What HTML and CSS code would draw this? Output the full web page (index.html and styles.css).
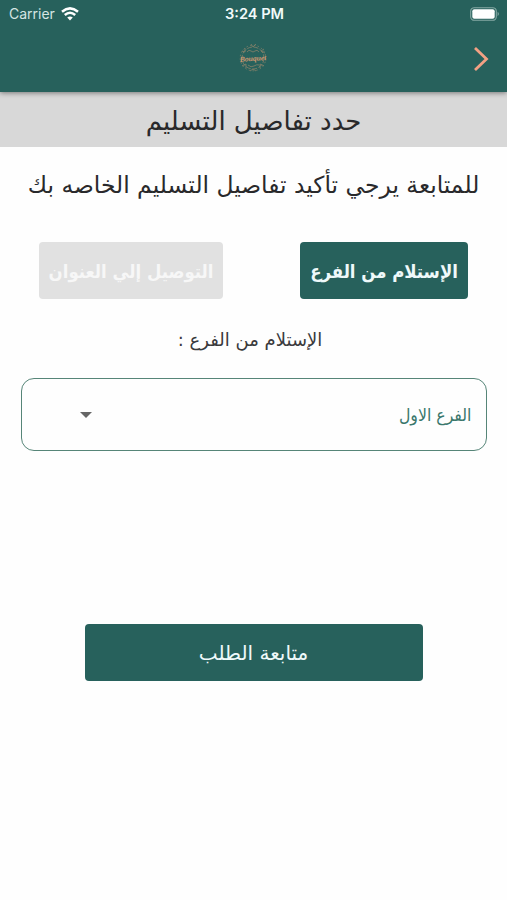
FILE: index.html
```html
<!DOCTYPE html>
<html lang="ar" dir="rtl">
<head>
    <meta charset="UTF-8">
    <meta name="viewport" content="width=device-width, initial-scale=1.0">
    <title>Bouquet</title>
    <link rel="stylesheet" href="styles.css">
</head>
<body>
    <header class="header">
        <div class="status-bar" dir="ltr">
            <div class="carrier">
                <span>Carrier</span>
                <svg width="18" height="14" viewBox="0 0 18 14" fill="none" stroke="#fff" stroke-width="2.5">
                    <path d="M1 4.7Q9-2 17 4.7"/>
                    <path d="M3.8 8Q9 3.5 14.2 8"/>
                    <path d="M6.2 10.6Q9 8.2 11.8 10.6L9 13.4Z" fill="#fff" stroke="none"/>
                </svg>
            </div>
            <span class="time">3:24 PM</span>
            <svg class="battery" width="30" height="14" viewBox="0 0 30 14">
                <rect x="0.7" y="0.7" width="25.6" height="12.6" rx="3.6" fill="none" stroke="#86a9a4" stroke-width="1.1"/>
                <rect x="2.3" y="2.3" width="22.4" height="9.4" rx="2" fill="#fff"/>
                <path d="M27.6 4.8Q30.2 7 27.6 9.2Z" fill="#86a9a4"/>
            </svg>
        </div>
        <div class="nav-bar" dir="ltr">
            <svg class="logo" width="40" height="32" viewBox="-5 0 40 32" fill="none">
                <g stroke="#87816a" stroke-width="0.8">
                    <circle cx="14" cy="15" r="11" stroke-dasharray="5 1.5"/>
                    <circle cx="14" cy="15" r="12.8" stroke-dasharray="1.5 2.3"/>
                    <path d="M8 9q2-3 4-1t4 0 4 1M9 22q3 3 6 1t5-1"/>
                    <path d="M12 1l2 3 3-3M3 8l3 1 0-4M25 6l-3 2 4 2M3 23l4-2 0 4M21 25l0-4 4 2M11 28l3-2 3 2"/>
                </g>
                <text x="14" y="18" class="logo-text" transform="rotate(-4 14 15)">Bouquet</text>
            </svg>
            <svg class="arrow" width="18" height="26" viewBox="0 0 18 26">
                <path d="M3 2L14.5 13L3 24" fill="none" stroke="#f3a184" stroke-width="2.8"/>
            </svg>
        </div>
    </header>

    <h1 class="page-title"><span>حدد تفاصيل التسليم</span></h1>
    <main class="content">
        <p class="intro"><span>للمتابعة يرجي تأكيد تفاصيل التسليم الخاصه بك</span></p>
        <div class="options">
            <button class="btn option active"><span>الإستلام من الفرع</span></button>
            <button class="btn option address"><span>التوصيل إلي العنوان</span></button>
        </div>
        <p class="branch-label"><span>الإستلام من الفرع :</span></p>
        <div class="branch-select">
            <span class="branch-name">الفرع الاول</span>
            <svg width="12" height="6" viewBox="0 0 12 6"><path d="M0 0H12L6 6Z" fill="#666"/></svg>
        </div>
        <button class="btn submit"><span>متابعة الطلب</span></button>
    </main>
</body>
</html>
```
FILE: styles.css
```css
* {
    box-sizing: border-box;
}
body {
    margin: 0;
    background-color: #fefefe;
    color: #29292b;
    font-family: "DejaVu Sans", sans-serif;
}
h1, p {
    margin: 0;
    font-weight: normal;
    white-space: nowrap;
}
.header {
    position: relative;
    height: 92px;
    background-color: #27615c;
    box-shadow: 0 1px 5px rgba(0,0,0,0.45);
}
.status-bar {
    display: grid;
    grid-template-columns: 1fr auto 1fr;
    align-items: center;
    height: 27px;
    padding: 0 7px 0 9px;
    color: #f1fafa;
    font-family: Inter, sans-serif;
    font-size: 14px;
}
.carrier {
    display: flex;
    align-items: center;
    gap: 6px;
    color: #d5e5e3;
}
.time {
    font-weight: 600;
    font-size: 14.6px;
}
.battery {
    justify-self: end;
}
.nav-bar {
    display: grid;
    grid-template-columns: 1fr 40px 1fr;
    align-items: center;
    height: 64px;
    padding: 0 17px;
}
.logo {
    grid-column: 2;
    overflow: visible;
}
.arrow {
    grid-column: 3;
    justify-self: end;
}
.logo-text {
    fill: #d29a72;
    font: italic bold 7.6px "Liberation Serif", serif;
    text-anchor: middle;
}
.page-title {
    display: flex;
    align-items: center;
    justify-content: center;
    height: 55px;
    padding-top: 2px;
    background-color: #d8d8d8;
    font-size: 26px;
}
.content {
    display: flex;
    flex-direction: column;
    align-items: center;
}
.intro {
    display: flex;
    align-items: center;
    height: 76px;
    font-size: 23.4px;
}
.options {
    display: flex;
    justify-content: space-between;
    width: 100%;
    margin-top: 19px;
    padding: 0 39px;
}
.btn {
    display: flex;
    align-items: center;
    justify-content: center;
    height: 57px;
    padding: 0;
    border: none;
    border-radius: 4px;
    background-color: #27615c;
    color: #eff9fa;
    font-family: inherit;
    font-size: 20px;
    white-space: nowrap;
}
.option {
    width: 168px;
    padding-top: 2px;
    font-family: "DejaVu Sans Condensed", "DejaVu Sans", sans-serif;
    font-stretch: condensed;
    font-weight: bold;
    font-size: 18.4px;
}
.option.address {
    width: 184px;
    background-color: #e1e1e1;
    color: #f7f7f7;
}
.branch-label {
    display: flex;
    align-items: center;
    height: 79px;
    padding-top: 2px;
    padding-right: 7px;
    color: #3a3a3c;
    font-size: 18px;
}
.branch-select {
    display: flex;
    align-items: center;
    justify-content: space-between;
    width: 466px;
    height: 73px;
    padding: 0 14px 0 58px;
    border: 1.5px solid #568578;
    border-radius: 13px;
}
.branch-name {
    color: #39776c;
    font-family: "DejaVu Sans Condensed", "DejaVu Sans", sans-serif;
    font-stretch: condensed;
    font-size: 17.5px;
}
.submit {
    width: 338px;
    margin-top: 173px;
}
```
